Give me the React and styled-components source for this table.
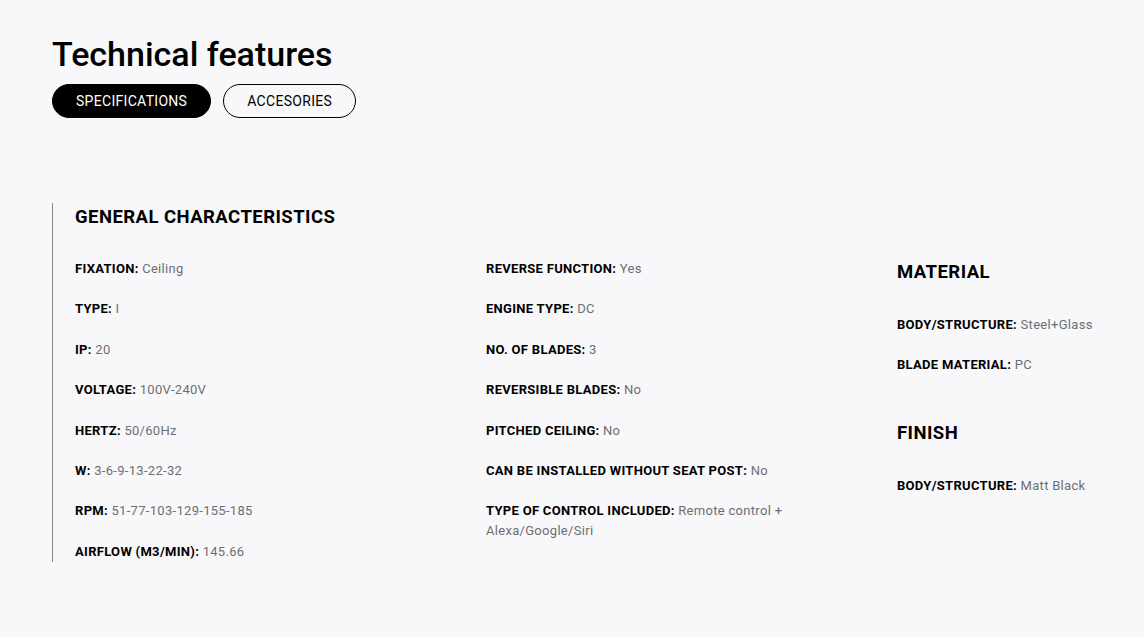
import React, { useState } from 'react';
import styled, { createGlobalStyle } from 'styled-components';

const GlobalStyle = createGlobalStyle`
	body {
		margin: 0;
		background: #f8f8fa;
		font-family: Roboto, 'Liberation Sans', sans-serif;
		color: #000;
	}
`;

const Page = styled.div`
	padding: 34px 30px 40px 52px;
`;

const Title = styled.h1`
	margin: 0 0 10px;
	font-size: 34px;
	font-weight: 500;
	line-height: 40px;
	letter-spacing: 0;
`;

const Tabs = styled.div`
	display: flex;
	gap: 12px;
`;

const Tab = styled.button`
	height: 34px;
	padding: 0 23px;
	border-radius: 17px;
	border: 1px solid #000;
	background: ${(p) => (p.active ? '#000' : 'transparent')};
	color: ${(p) => (p.active ? '#fff' : '#000')};
	font-family: Roboto, 'Liberation Sans', sans-serif;
	font-size: 14px;
	letter-spacing: 0.3px;
	text-transform: uppercase;
	cursor: pointer;
`;

const Section = styled.section`
	margin-top: 85px;
	border-left: 1px solid #8a8a8a;
	padding: 2px 0 0 22px;
	min-height: 355px;
`;

const Heading = styled.h3`
	margin: 0;
	font-size: 18.5px;
	font-weight: 700;
	line-height: 24px;
	letter-spacing: 0.45px;
	text-transform: uppercase;
`;

const Grid = styled.div`
	display: grid;
	grid-template-columns: 411px 411px 1fr;
	margin-top: 30px;
`;

const Column = styled.div`
	display: flex;
	flex-direction: column;
	gap: 20.4px;
`;

const SideColumn = styled.div`
	display: flex;
	flex-direction: column;
	padding-top: 1px;
`;

const Group = styled.div`
	display: flex;
	flex-direction: column;
	gap: 20px;
	margin-bottom: 46px;

	& > h3 {
		margin-bottom: 11px;
	}
`;

const Item = styled.p`
	margin: 0;
	font-size: 13px;
	line-height: 20px;
	letter-spacing: 0.3px;
	color: #6b6f74;
	max-width: 320px;

	b {
		color: #000;
		font-weight: 700;
	}
`;

const general = [
	[
		['Fixation', 'Ceiling'],
		['Type', 'I'],
		['IP', '20'],
		['Voltage', '100V-240V'],
		['Hertz', '50/60Hz'],
		['W', '3-6-9-13-22-32'],
		['RPM', '51-77-103-129-155-185'],
		['Airflow (M3/MIN)', '145.66'],
	],
	[
		['Reverse function', 'Yes'],
		['Engine type', 'DC'],
		['No. of blades', '3'],
		['Reversible blades', 'No'],
		['Pitched ceiling', 'No'],
		['Can be installed without seat post', 'No'],
		['Type of control included', 'Remote control + Alexa/Google/Siri'],
	],
];

const side = [
	{
		title: 'Material',
		items: [
			['Body/structure', 'Steel+Glass'],
			['Blade material', 'PC'],
		],
	},
	{
		title: 'Finish',
		items: [['Body/structure', 'Matt Black']],
	},
];

const Spec = ({ label, value }) => (
	<Item>
		<b>{label.toUpperCase()}:</b> {value}
	</Item>
);

const App = () => {
	const [tab, setTab] = useState('specs');

	return (
		<Page>
			<GlobalStyle />
			<Title>Technical features</Title>
			<Tabs>
				<Tab active={tab === 'specs'} onClick={() => setTab('specs')}>
					Specifications
				</Tab>
				<Tab active={tab === 'acc'} onClick={() => setTab('acc')}>
					Accesories
				</Tab>
			</Tabs>

			<Section>
				<Heading>General characteristics</Heading>
				<Grid>
					{general.map((col, i) => (
						<Column key={i}>
							{col.map(([l, v]) => (
								<Spec key={l} label={l} value={v} />
							))}
						</Column>
					))}
					<SideColumn>
						{side.map((g) => (
							<Group key={g.title}>
								<Heading>{g.title}</Heading>
								{g.items.map(([l, v]) => (
									<Spec key={l} label={l} value={v} />
								))}
							</Group>
						))}
					</SideColumn>
				</Grid>
			</Section>
		</Page>
	);
};

export default App;
